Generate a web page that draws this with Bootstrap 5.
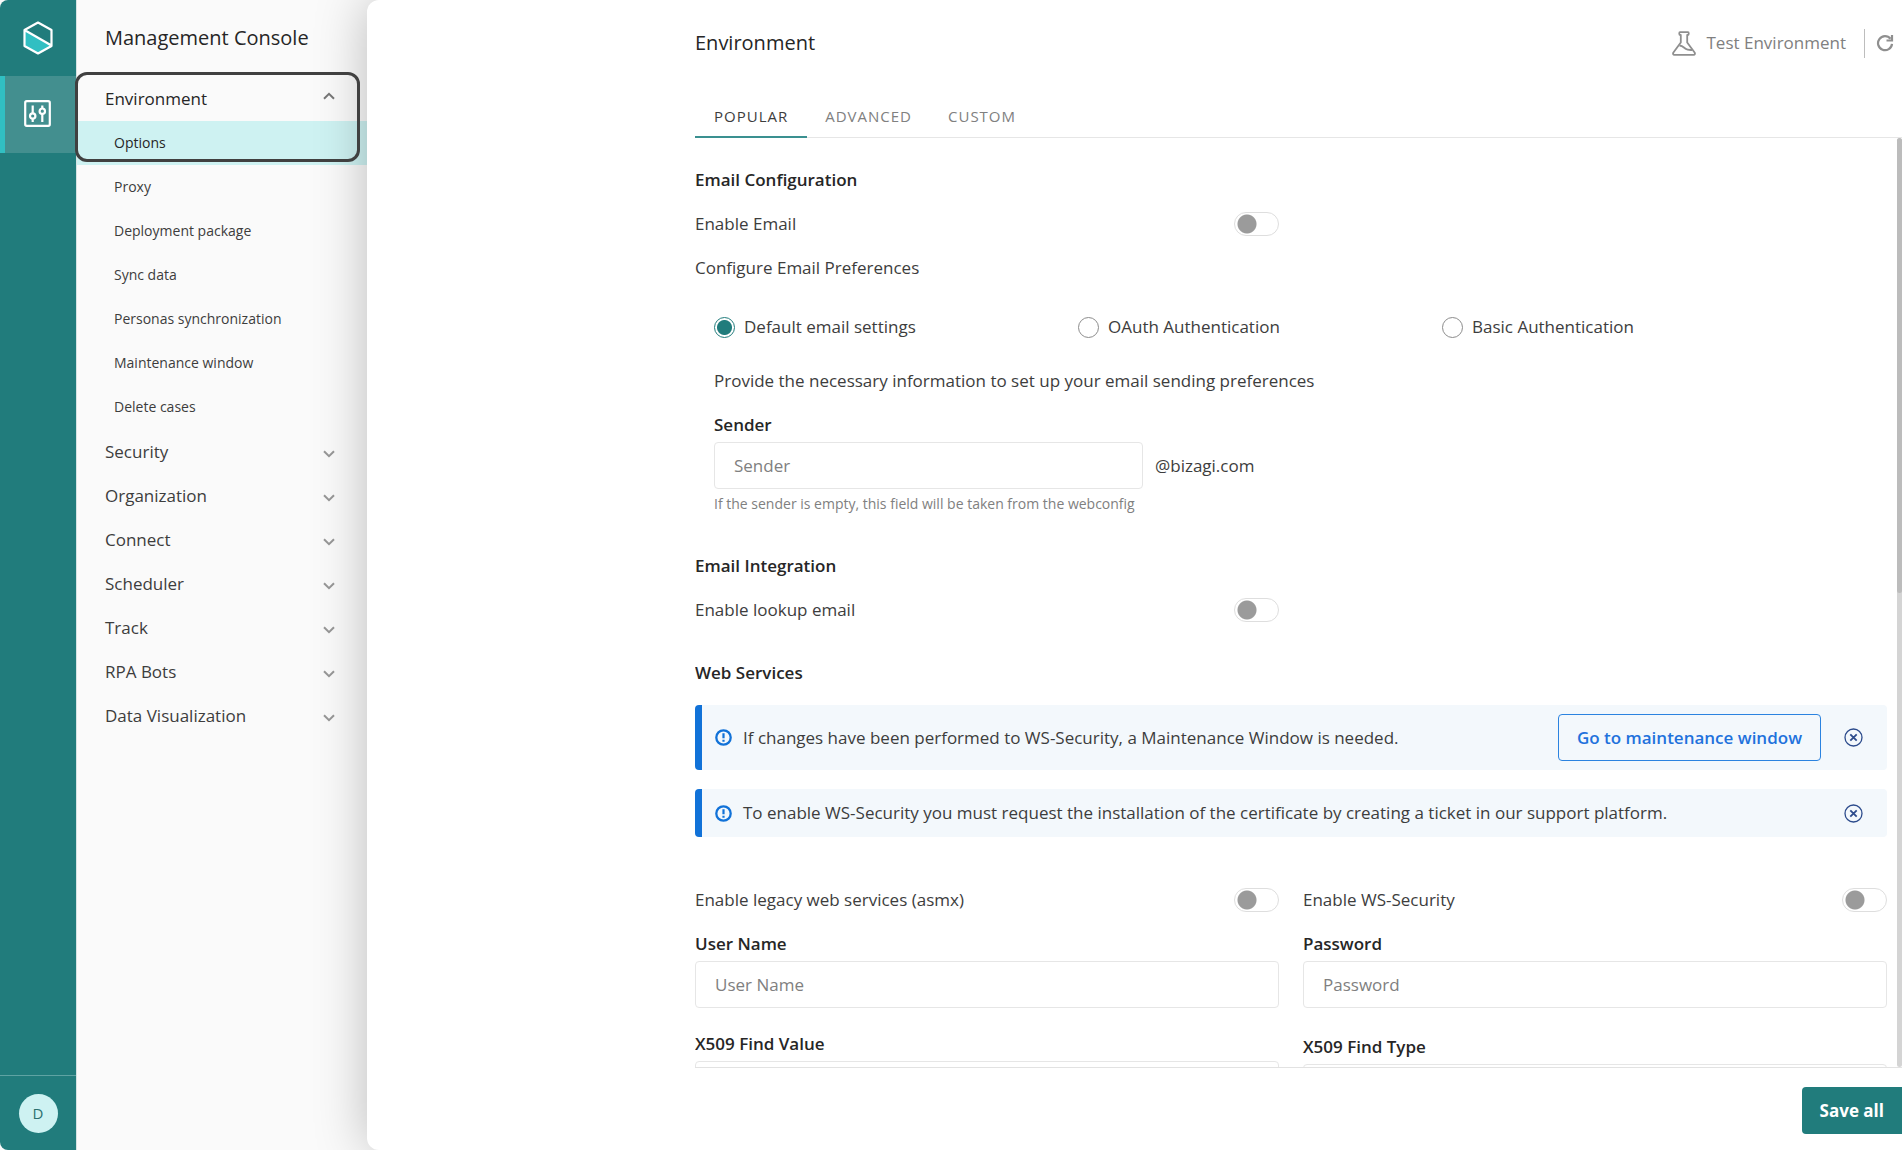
<!DOCTYPE html>
<html lang="en">
<head>
<meta charset="utf-8">
<meta name="viewport" content="width=device-width, initial-scale=1">
<title>Management Console</title>
<link href="https://cdn.jsdelivr.net/npm/bootstrap@5.3.0/dist/css/bootstrap.min.css" rel="stylesheet">
<style>
  :root { --teal: #217c7c; --aqua: #31bfc2; --mint: #cef2f2; --ink: #3d3d3d; --ink-strong: #262626; --line: #e6e6e6; --muted-ink: #808080; --blue: #1172d8; }
  body { font-family: "Open Sans", "Noto Sans", sans-serif; font-size: 17px; line-height: 24px; color: var(--ink); background: #fafafa; }
  .app { height: 100vh; background: #fafafa; }

  /* icon rail */
  .rail { width: 76px; background: var(--teal); border-radius: 8px 0 0 8px; }
  .rail-item { height: 76px; }
  .rail-item.active { height: 77px; padding-bottom: 2px; background: #438f8f; border-left: 5px solid var(--aqua); border-right: 7px solid #438f8f; }
  .rail-user { height: 75px; border-top: 1px solid #5fa3a3; }
  .avatar { width: 39px; height: 39px; background: var(--mint); color: #2b6f6f; font-size: 15px; }

  /* navigation */
  .side { width: 291px; border-left: 1px solid #d5e3e3; }
  .side-title { font-size: 20px; line-height: 28px; font-weight: 500; color: var(--ink-strong); padding: 24px 28px 25px; }
  .menu-row { height: 44px; padding: 0 32px 0 28px; color: var(--ink); text-decoration: none; }
  .menu-row.open { color: var(--ink-strong); font-weight: 500; }
  .menu-row svg { margin-top: 4px; }
  .menu-row.open svg { margin-top: -6px; }
  .sub-row { height: 44px; padding: 0 37px; font-size: 14px; color: var(--ink); text-decoration: none; }
  .sub-row.active { background: var(--mint); font-weight: 500; color: var(--ink-strong); }
  .submenu { margin-bottom: 1px; }
  .menu-mark { left: -2px; right: 7px; top: -5px; height: 90px; border: 3px solid #404040; border-radius: 12px; z-index: 3; pointer-events: none; }

  /* main panel */
  .panel { min-width: 0; background: #fff; border-radius: 12px 0 0 12px; box-shadow: 0 0 52px rgba(0,0,0,.25); z-index: 2; }
  .sheet { width: 100%; max-width: 1207px; }
  .sheet-head { padding-top: 28px; flex: none; }
  .sheet-title { font-size: 20px; line-height: 30px; font-weight: 500; color: var(--ink-strong); }
  .env { color: var(--muted-ink); gap: 10px; }
  .env-rule { width: 1px; height: 29px; background: #bdbdbd; margin: 0 11px 0 18px; }
  .icon-btn { border: 0; background: none; padding: 0; display: flex; color: #8f8f8f; }
  .tabs { margin-top: 37px; border-bottom: 1px solid var(--line); }
  .tab-link { font-size: 15px; line-height: 20px; letter-spacing: 1px; padding: 11px 18px 10px; border: 0; border-bottom: 1px solid transparent; background: none; color: var(--muted-ink); }
  .tab-link.active { color: var(--ink); border-bottom: 2px solid #3a9090; padding: 10px 19px; margin-bottom: -1px; }

  .sheet-body { min-height: 0; }
  .scroll { overflow-y: auto; scrollbar-width: none; padding: 20px 10px 0 0; min-width: 0; }
  .scroll::-webkit-scrollbar { display: none; }
  .track { width: 5px; background: #d4d4d4; border-radius: 3px; }
  .thumb { height: 49%; background: #bcbcbc; border-radius: 3px; }

  .line { min-height: 44px; }
  .strong { font-weight: 600; color: var(--ink-strong); }
  .form-check-input.toggle { width: 45px; height: 24px; margin: 0; flex: none; border: 1px solid #dedede; border-radius: 12px; background: radial-gradient(circle at 12px 11px, #9b9b9b 9px, transparent 10px) #fff; }
  .inner { padding-left: 19px; }
  .choices { max-width: 1092px; padding: 25px 0 20px; }
  .choices .choice { flex: 1 1 0; gap: 9px; }
  .form-check-input.dot { width: 21px; height: 21px; margin: 0; border: 1px solid #8c8c8c; background: #fff; }
  .form-check-input.dot:checked { border-color: var(--teal); background: radial-gradient(circle, var(--teal) 7px, transparent 8px) #fff; }
  .field-group { padding-top: 10px; }
  .field { height: 47px; border: 1px solid var(--line); border-radius: 4px; padding: 0 19px; font-size: 17px; color: var(--ink); }
  .field::placeholder { color: var(--muted-ink); }
  .field-label { line-height: 24px; margin-bottom: 5px; }
  .sender { width: 429px; }
  .help { font-size: 14px; line-height: 20px; color: var(--muted-ink); padding-top: 5px; }
  .section-gap { margin-top: 30px; }
  .section-gap-sm { margin-top: 19px; }

  .notices { padding-top: 10px; }
  .notice { background: #f3f8fc; border-left: 7px solid var(--blue); border-radius: 4px; min-height: 48px; padding: 9px 24px 9px 13px; margin-bottom: 19px; gap: 11px; }
  .notice.slim { padding-top: 0; padding-bottom: 0; }
  .go { height: 47px; border: 1px solid #2b83e0; border-radius: 4px; color: #1f72dc; font-weight: 600; padding: 0 18px; font-size: 17px; background: transparent; }
  .notice .icon-btn { color: #2c4b8c; margin-left: 12px; }
  .services { padding-top: 22px; }
  .pair-gap { margin-bottom: 24px; }
  .type-group { padding-top: 3px; }
  .sheet-foot { height: 83px; border-top: 1px solid #e2e2e2; }
  .save { height: 47px; margin-top: 19px; border: 0; border-radius: 4px 0 0 4px; background: var(--teal); color: #fff; font-weight: 700; padding: 0 18px; font-size: 17px; }
</style>
<script src="https://cdn.jsdelivr.net/npm/bootstrap@5.3.0/dist/js/bootstrap.bundle.min.js"></script>
</head>
<body>
<svg width="0" height="0" class="position-absolute" aria-hidden="true">
  <symbol id="down" viewBox="0 0 12 8"><path d="M1 1.2 6 6.2 11 1.2" fill="none" stroke="#979797" stroke-width="2"/></symbol>
  <symbol id="up" viewBox="0 0 12 8"><path d="M1 6.8 6 1.8 11 6.8" fill="none" stroke="#777" stroke-width="2"/></symbol>
  <symbol id="alert" viewBox="0 0 17 17"><circle cx="8.5" cy="8.5" r="7.2" fill="none" stroke="#1172d8" stroke-width="2.3"/><path d="M8.5 4.2v5M8.5 10.8v2" stroke="#1172d8" stroke-width="2.2"/></symbol>
  <symbol id="close" viewBox="0 0 19 19"><circle cx="9.5" cy="9.5" r="8.5" fill="none" stroke="currentColor" stroke-width="1.3"/><path d="m6.3 6.3 6.4 6.4m0-6.4-6.4 6.4" stroke="currentColor" stroke-width="1.8"/></symbol>
</svg>
<div class="app d-flex">
  <div class="rail d-flex flex-column flex-shrink-0">
    <a href="#" class="rail-item d-flex align-items-center justify-content-center" aria-label="Home">
      <svg width="30" height="34" viewBox="0 0 30 34"><path d="M1.5 9 28.5 24.5 15 32.5 1.5 25z" fill="#31bfc2"/><path d="M15 1.5 28.5 9v16L15 32.5 1.5 25V9zM1.5 9l27 15.5" fill="none" stroke="#fff" stroke-width="2.2" stroke-linejoin="round"/></svg>
    </a>
    <a href="#" class="rail-item active d-flex align-items-center justify-content-center" aria-label="Settings">
      <svg width="27" height="27" viewBox="0 0 27 27" fill="none" stroke="#fff" stroke-width="2.2"><rect x="1.2" y="1.2" width="24.6" height="24.6" rx="1.5"/><circle cx="8.7" cy="16" r="2.7"/><path d="M8.700 5.500v7.700M8.700 18.800v3.200M18.300 5.500v3M18.300 14v8"/><circle cx="18.300" cy="11.200" r="2.700"/></svg>
    </a>
    <div class="rail-user mt-auto d-flex align-items-center justify-content-center">
      <div class="avatar rounded-circle d-flex align-items-center justify-content-center">D</div>
    </div>
  </div>

  <nav class="side flex-shrink-0">
    <h1 class="side-title mb-0">Management Console</h1>
    <div class="position-relative">
      <div class="menu-mark position-absolute"></div>
      <a href="#" class="menu-row open d-flex align-items-center justify-content-between">Environment<svg width="12" height="8"><use href="#up"/></svg></a>
      <div class="submenu">
        <a href="#" class="sub-row active d-flex align-items-center">Options</a>
        <a href="#" class="sub-row d-flex align-items-center">Proxy</a>
        <a href="#" class="sub-row d-flex align-items-center">Deployment package</a>
        <a href="#" class="sub-row d-flex align-items-center">Sync data</a>
        <a href="#" class="sub-row d-flex align-items-center">Personas synchronization</a>
        <a href="#" class="sub-row d-flex align-items-center">Maintenance window</a>
        <a href="#" class="sub-row d-flex align-items-center">Delete cases</a>
      </div>
      <a href="#" class="menu-row d-flex align-items-center justify-content-between">Security<svg width="12" height="8"><use href="#down"/></svg></a>
      <a href="#" class="menu-row d-flex align-items-center justify-content-between">Organization<svg width="12" height="8"><use href="#down"/></svg></a>
      <a href="#" class="menu-row d-flex align-items-center justify-content-between">Connect<svg width="12" height="8"><use href="#down"/></svg></a>
      <a href="#" class="menu-row d-flex align-items-center justify-content-between">Scheduler<svg width="12" height="8"><use href="#down"/></svg></a>
      <a href="#" class="menu-row d-flex align-items-center justify-content-between">Track<svg width="12" height="8"><use href="#down"/></svg></a>
      <a href="#" class="menu-row d-flex align-items-center justify-content-between">RPA Bots<svg width="12" height="8"><use href="#down"/></svg></a>
      <a href="#" class="menu-row d-flex align-items-center justify-content-between">Data Visualization<svg width="12" height="8"><use href="#down"/></svg></a>
    </div>
  </nav>

  <main class="panel position-relative flex-grow-1 d-flex flex-column">
    <header class="sheet sheet-head ms-auto">
      <div class="d-flex align-items-center">
        <h2 class="sheet-title mb-0 me-auto">Environment</h2>
        <div class="env d-flex align-items-center">
          <svg width="24" height="25" viewBox="0 0 24 25" fill="none" stroke="#8f8f8f" stroke-width="1.8" stroke-linejoin="round"><path d="M8 1.2h8c1 0 1 2.8 0 2.800h-.8v7.500L22.600 21.500c.7 1.200.3 2.300-1 2.300H2.400c-1.300 0-1.700-1.100-1-2.300L8.800 11.500V4H8c-1 0-1-2.800 0-2.800z"/><path d="M7.500 14.500c3 .3 4 1.800 6 3.300s4.500 1.200 6.500 1.200"/></svg>
          <span>Test Environment</span>
        </div>
        <div class="env-rule"></div>
        <button type="button" class="icon-btn me-2" aria-label="Refresh"><svg width="18" height="18" viewBox="0 0 18 18" fill="none" stroke="currentColor" stroke-width="2.2"><path d="M16 9.800A7 7 0 1 1 14.500 4.800"/><path d="M16 1v5.500h-5.500"/></svg></button>
      </div>
      <div class="tabs d-flex align-items-end" role="tablist">
        <button type="button" class="tab-link active" role="tab" aria-selected="true">POPULAR</button>
        <button type="button" class="tab-link" role="tab">ADVANCED</button>
        <button type="button" class="tab-link" role="tab">CUSTOM</button>
      </div>
    </header>

    <div class="sheet sheet-body ms-auto flex-grow-1 d-flex">
      <form class="scroll flex-grow-1">
        <div class="line strong d-flex align-items-center">Email Configuration</div>
        <div class="row gx-4"><div class="col-6"><div class="line d-flex align-items-center justify-content-between"><label for="enableEmail">Enable Email</label><input id="enableEmail" type="checkbox" class="form-check-input toggle"></div></div></div>
        <div class="line d-flex align-items-center">Configure Email Preferences</div>

        <div class="inner">
          <div class="choices d-flex">
            <div class="choice d-flex align-items-center"><input class="form-check-input dot" type="radio" name="auth" id="authDefault" checked><label for="authDefault">Default email settings</label></div>
            <div class="choice d-flex align-items-center"><input class="form-check-input dot" type="radio" name="auth" id="authOauth"><label for="authOauth">OAuth Authentication</label></div>
            <div class="choice d-flex align-items-center"><input class="form-check-input dot" type="radio" name="auth" id="authBasic"><label for="authBasic">Basic Authentication</label></div>
          </div>
          <div class="line d-flex align-items-center">Provide the necessary information to set up your email sending preferences</div>
          <div class="field-group"><label for="sender" class="field-label strong d-block">Sender</label></div>
          <div class="d-flex align-items-center gap-2">
            <input id="sender" type="text" class="form-control field sender" placeholder="Sender"><span class="ps-1">@bizagi.com</span>
          </div>
          <div class="help">If the sender is empty, this field will be taken from the webconfig</div>
        </div>

        <div class="line strong d-flex align-items-center section-gap">Email Integration</div>
        <div class="row gx-4"><div class="col-6"><div class="line d-flex align-items-center justify-content-between"><label for="lookup">Enable lookup email</label><input id="lookup" type="checkbox" class="form-check-input toggle"></div></div></div>
        <div class="line strong d-flex align-items-center section-gap-sm">Web Services</div>

        <div class="notices">
          <div class="notice d-flex align-items-center">
            <svg width="17" height="17" class="flex-shrink-0"><use href="#alert"/></svg>
            <span class="me-auto">If changes have been performed to WS-Security, a Maintenance Window is needed.</span>
            <button type="button" class="btn go">Go to maintenance window</button>
            <button type="button" class="icon-btn" aria-label="Dismiss"><svg width="19" height="19"><use href="#close"/></svg></button>
          </div>
          <div class="notice slim d-flex align-items-center">
            <svg width="17" height="17" class="flex-shrink-0"><use href="#alert"/></svg>
            <span class="me-auto">To enable WS-Security you must request the installation of the certificate by creating a ticket in our support platform.</span>
            <button type="button" class="icon-btn" aria-label="Dismiss"><svg width="19" height="19"><use href="#close"/></svg></button>
          </div>
        </div>

        <div class="row gx-4 services">
          <div class="col-6">
            <div class="line d-flex align-items-center justify-content-between"><label for="legacy">Enable legacy web services (asmx)</label><input id="legacy" type="checkbox" class="form-check-input toggle"></div>
            <div class="field-group pair-gap"><label for="userName" class="field-label strong d-block">User Name</label><input id="userName" type="text" class="form-control field" placeholder="User Name"></div>
            <div><label for="findValue" class="field-label strong d-block">X509 Find Value</label><input id="findValue" type="text" class="form-control field"></div>
          </div>
          <div class="col-6">
            <div class="line d-flex align-items-center justify-content-between"><label for="wss">Enable WS-Security</label><input id="wss" type="checkbox" class="form-check-input toggle"></div>
            <div class="field-group pair-gap"><label for="password" class="field-label strong d-block">Password</label><input id="password" type="password" class="form-control field" placeholder="Password"></div>
            <div class="type-group"><label for="findType" class="field-label strong d-block">X509 Find Type</label><select id="findType" class="form-select field"><option></option></select></div>
          </div>
        </div>
      </form>
      <div class="track flex-shrink-0"><div class="thumb"></div></div>
    </div>

    <footer class="sheet sheet-foot ms-auto d-flex justify-content-end align-items-start flex-shrink-0">
      <button type="button" class="btn save">Save all</button>
    </footer>
  </main>
</div>
</body>
</html>
